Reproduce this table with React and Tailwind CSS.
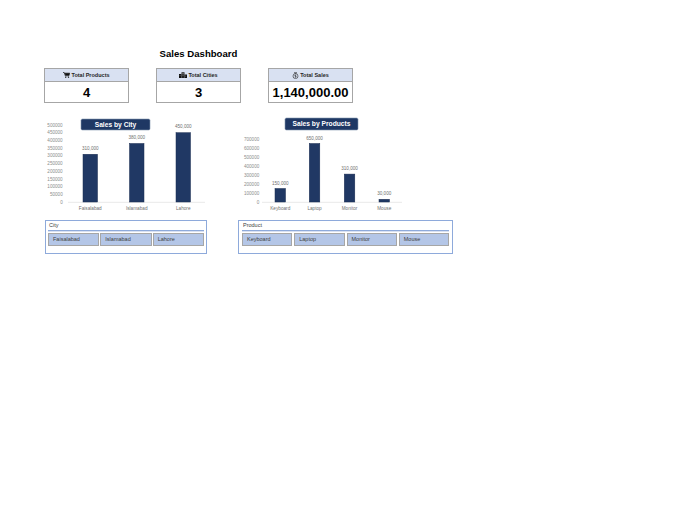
import React from "react";

const navy = "#203864";

const CartIcon = () => (
  <svg width="7" height="6" viewBox="0 0 14 12" className="shrink-0">
    <path d="M0 1h2.4l2.2 6.6h7.2L13.6 2.4H3.2" fill="none" stroke="#111" strokeWidth="1.4" />
    <path d="M3.4 2.6h9.8l-1.6 4.6H4.9z" fill="#111" />
    <circle cx="5.4" cy="10.3" r="1.4" fill="#111" />
    <circle cx="11" cy="10.3" r="1.4" fill="#111" />
  </svg>
);

const CityIcon = () => (
  <svg width="8" height="6" viewBox="0 0 16 12" className="shrink-0">
    <rect x="0" y="4" width="5" height="8" fill="#111" />
    <rect x="5" y="0.5" width="6" height="11.5" fill="#222" />
    <rect x="11" y="5" width="5" height="7" fill="#111" />
    <rect x="6.5" y="2.5" width="1.2" height="1.2" fill="#ccc" />
    <rect x="8.5" y="2.5" width="1.2" height="1.2" fill="#ccc" />
    <rect x="6.5" y="5.5" width="1.2" height="1.2" fill="#ccc" />
    <rect x="8.5" y="5.5" width="1.2" height="1.2" fill="#ccc" />
    <rect x="1.5" y="6.5" width="1.2" height="1.2" fill="#ccc" />
    <rect x="12.5" y="7.5" width="1.2" height="1.2" fill="#ccc" />
  </svg>
);

const MoneyIcon = () => (
  <svg width="7" height="7" viewBox="0 0 14 14" className="shrink-0">
    <rect x="5" y="0.5" width="4" height="2" rx="0.5" fill="none" stroke="#111" strokeWidth="1" />
    <circle cx="7" cy="8.2" r="5" fill="none" stroke="#111" strokeWidth="1.1" />
    <path d="M7 5.3v5.8M8.4 6.3H6.4a1 1 0 0 0 0 2h1.2a1 1 0 0 1 0 2H5.6" fill="none" stroke="#111" strokeWidth="0.8" />
  </svg>
);

const cards = [
  { label: "Total Products", value: "4", icon: <CartIcon /> },
  { label: "Total Cities", value: "3", icon: <CityIcon /> },
  { label: "Total Sales", value: "1,140,000.00", icon: <MoneyIcon /> },
];

const KpiCard = ({ label, value, icon }) => (
  <div className="w-[85px] border border-[#a6a6a6] bg-white">
    <div className="h-[13px] bg-[#d9e1f2] border-b border-[#a6a6a6] flex items-center justify-center gap-[1px] text-[5.5px] font-bold text-[#262626]">
      {icon}
      <span>{label}</span>
    </div>
    <div className="h-[20px] flex items-center justify-center text-[13px] font-bold text-black leading-none">
      {value}
    </div>
  </div>
);

// simple column chart, 1 svg unit = 1px
const BarChart = ({ width, title, titleBox, yLabels, yTop, yStep, labelRight, axis, bars, max, labelGap }) => {
  const base = 87;
  const span = base - yTop;
  return (
    <svg width={width} height="100" viewBox={`0 0 ${width} 100`} className="block">
      {yLabels.map((v, i) => (
        <text key={v} x={labelRight} y={yTop + i * yStep + 1.6} fontSize="4.6" textAnchor="end" fill="#8c8c8c">
          {v}
        </text>
      ))}
      <line x1={axis[0]} x2={axis[1]} y1={base + 0.3} y2={base + 0.3} stroke="#d9d9d9" strokeWidth="0.6" />
      {bars.map((b) => {
        const h = (b.value / max) * span;
        const top = base - h;
        return (
          <g key={b.name}>
            <rect x={b.x} y={top} width={b.w} height={h} fill={navy} stroke="#1a2c50" strokeWidth="0.5" />
            <text x={b.x + b.w / 2} y={top - labelGap} fontSize="4.6" textAnchor="middle" fill="#6f6f6f">
              {b.value.toLocaleString("en-US")}
            </text>
            <text x={b.x + b.w / 2} y="95" fontSize="4.7" textAnchor="middle" fill="#6f6f6f">
              {b.name}
            </text>
          </g>
        );
      })}
      <rect x={titleBox.x} y={titleBox.y} width={titleBox.w} height={titleBox.h} rx="1.5" fill="#1f3864" stroke="#8497b0" strokeWidth="0.6" />
      <text x={titleBox.x + titleBox.w / 2} y={titleBox.y + titleBox.h / 2 + 2.4} fontSize="6.7" fontWeight="bold" textAnchor="middle" fill="#fff">
        {title}
      </text>
    </svg>
  );
};

const Slicer = ({ title, items, cols, px, gap, width }) => (
  <div className={`${width} h-[34px] border border-[#8eaadb] bg-white flex flex-col ${px}`}>
    <div className="h-[9px] pl-[1px] text-[5.5px] leading-[9px] text-[#404040]">{title}</div>
    <div className="h-[2px] border-t border-[#8eaadb] bg-[#d9e1f2]" />
    <div className={`mt-[1px] grid ${cols} ${gap}`}>
      {items.map((it) => (
        <div key={it} className="h-[13px] border border-[#a6a6a6] bg-[#b4c6e7] pl-[4px] flex items-center text-[5.5px] text-[#404040]">
          {it}
        </div>
      ))}
    </div>
  </div>
);

export default function App() {
  return (
    <div className="min-h-screen w-full bg-white font-['Liberation_Sans',Arial,sans-serif] pt-[48px] pl-[44px]">
      <div className="w-[309px] h-[12px] leading-[12px] text-center text-[9.6px] font-bold text-black">
        Sales Dashboard
      </div>

      <div className="mt-[8px] flex gap-[27px]">
        {cards.map((c) => (
          <KpiCard key={c.label} {...c} />
        ))}
      </div>

      <div className="mt-[12px] flex gap-[30px]">
        <div className="w-[164px] flex flex-col">
          <BarChart
            width={164}
            title="Sales by City"
            titleBox={{ x: 37, y: 4, w: 69, h: 11 }}
            yLabels={["500000", "450000", "400000", "350000", "300000", "250000", "200000", "150000", "100000", "50000", "0"]}
            yTop={10}
            yStep={7.7}
            labelRight={18.7}
            axis={[24, 161]}
            max={500000}
            labelGap={4.4}
            bars={[
              { name: "Faisalabad", value: 310000, x: 39, w: 14.5 },
              { name: "Islamabad", value: 380000, x: 85.5, w: 14.5 },
              { name: "Lahore", value: 450000, x: 132, w: 14.5 },
            ]}
          />
          <div className="mt-[5px] ml-[1px]">
            <Slicer title="City" items={["Faisalabad", "Islamabad", "Lahore"]} cols="grid-cols-3" gap="gap-[1px]" px="px-[2px]" width="w-[162px]" />
          </div>
        </div>

        <div className="w-[215px] flex flex-col">
          <BarChart
            width={215}
            title="Sales by Products"
            titleBox={{ x: 47, y: 3, w: 73, h: 12 }}
            yLabels={["700000", "600000", "500000", "400000", "300000", "200000", "100000", "0"]}
            yTop={24}
            yStep={9}
            labelRight={21.3}
            axis={[24, 164]}
            max={700000}
            labelGap={3.9}
            bars={[
              { name: "Keyboard", value: 150000, x: 37, w: 10.5 },
              { name: "Laptop", value: 650000, x: 71.3, w: 10.5 },
              { name: "Monitor", value: 310000, x: 106.3, w: 10.5 },
              { name: "Mouse", value: 30000, x: 141, w: 10.5 },
            ]}
          />
          <div className="mt-[5px]">
            <Slicer title="Product" items={["Keyboard", "Laptop", "Monitor", "Mouse"]} cols="grid-cols-4" gap="gap-[2px]" px="px-[3px]" width="w-[215px]" />
          </div>
        </div>
      </div>
    </div>
  );
}
